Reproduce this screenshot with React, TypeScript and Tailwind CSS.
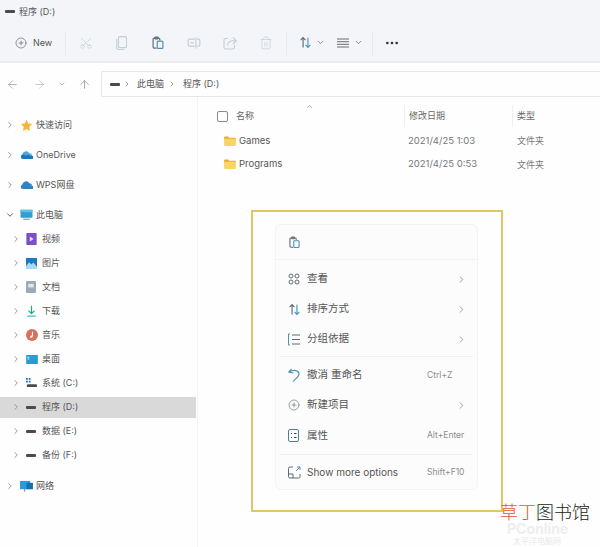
import React from "react";
import {
  ArrowLeft, ArrowRight, ArrowUp, ChevronDown, ChevronRight, ChevronUp, CirclePlus, Scissors, Trash2, MoreHorizontal,
} from "lucide-react";

const font = "font-['Inter','Noto_Sans_CJK_SC',sans-serif]";

function Drive({ className = "" }: { className?: string }) {
  return <span className={`block w-[10px] h-[3px] rounded-[1px] bg-[#4b4b4b] ${className}`} />;
}

function Paste({ size = 14, color = "#5b6b78" }: { size?: number; color?: string }) {
  return (
    <svg width={size} height={size} viewBox="0 0 18 18" fill="none" stroke={color} strokeWidth="1.5">
      <path d="M7 15.500H4a1.300 1.300 0 0 1-1.300-1.300V4A1.300 1.300 0 0 1 4 2.700h6A1.300 1.300 0 0 1 11.300 4v1.500" />
      <rect x="5" y="1.500" width="4" height="2.400" rx="0.700" />
      <rect x="8" y="6.500" width="7.300" height="9.500" rx="1.200" stroke="#4f8fae" />
    </svg>
  );
}

const off = "#c3ced6";

function CopyIcon() {
  return (
    <svg width="14" height="14" viewBox="0 0 14 14" fill="none" stroke={off} strokeWidth="1.100">
      <rect x="3.500" y="0.600" width="8" height="11" rx="1.300" />
      <path d="M1.700 3v8.500a2 2 0 0 0 2 2h5.500" />
    </svg>
  );
}

function Rename() {
  return (
    <svg width="14" height="14" viewBox="0 0 18 18" fill="none" stroke={off} strokeWidth="1.400">
      <path d="M10 4H3a1.500 1.500 0 0 0-1.500 1.500v6A1.500 1.500 0 0 0 3 13h7M13 4h2a1.500 1.500 0 0 1 1.500 1.500v6A1.500 1.500 0 0 1 15 13h-2M11.500 2v14M4.500 8.500h4" />
    </svg>
  );
}

function ShareIcon() {
  return (
    <svg width="14" height="14" viewBox="0 0 14 14" fill="none" stroke={off} strokeWidth="1.100">
      <path d="M5 2.500H2.500A1.500 1.500 0 0 0 1 4v7.500A1.500 1.500 0 0 0 2.500 13H10a1.500 1.500 0 0 0 1.500-1.500V9" />
      <path d="M4.500 9.500C5 6.500 7 4.800 10 4.800h3M10 1.500l3.300 3.300L10 8" />
    </svg>
  );
}

const Sort = ({ s = 13 }: { s?: number }) => (
  <svg width={s} height={s} viewBox="0 0 16 16" fill="none" strokeWidth="1.400">
    <path d="M5 14V2M2 5l3-3 3 3" stroke="#5d6a72" />
    <path d="M11 2v12M8 11l3 3 3-3" stroke="#4a93b5" />
  </svg>
);

const Lines = () => (
  <svg width="12" height="10" viewBox="0 0 12 10" fill="none" stroke="#6c6c6c">
    <path d="M0 1h12M0 3.700h12M0 6.300h12M0 9h12" />
  </svg>
);

const Star = () => (
  <svg width="13" height="13" viewBox="0 0 24 24"><path fill="#f4b63a" d="m12 1.500 3.200 6.800 7.300 1-5.300 5.200 1.300 7.500-6.500-3.600L5.500 22l1.300-7.500L1.500 9.300l7.300-1z" /></svg>
);
const Cloud = ({ c = "#1b76bd", t = "#4fa6de" }: { c?: string; t?: string }) => (
  <svg width="13" height="10" viewBox="0 0 16 12">
    <path fill={t} d="M3 6a4.500 4.500 0 0 1 8.500-2A3.500 3.500 0 0 1 15 7H5z" />
    <path fill={c} d="M3.500 11a2.800 2.800 0 0 1-.3-5.500C4.500 5 6 5.500 7 6.500c2-1 4-1 6 .5A2 2 0 0 1 15.500 11z" />
  </svg>
);
const Pc = () => (
  <svg width="13" height="12" viewBox="0 0 16 15">
    <rect x="0.500" y="1" width="15" height="10" rx="1" fill="#2f9fd0" />
    <rect x="0.500" y="1" width="15" height="3" fill="#5cc1e3" />
    <rect x="4" y="12" width="8" height="1.500" fill="#8a9aa6" />
  </svg>
);
const Video = () => (
  <svg width="11" height="12" viewBox="0 0 12 14">
    <rect width="12" height="14" rx="1" fill="#7d4ec9" />
    <path fill="#e9dcfb" d="m4 4 4.500 3L4 10z" />
  </svg>
);
const Pic = () => (
  <svg width="11" height="11" viewBox="0 0 12 12">
    <rect width="12" height="12" fill="#1e79c4" />
    <path fill="#a5dbf5" d="m0 9 3.500-4.500L6 7l2-2 4 4.500V12H0z" />
  </svg>
);
const Doc = () => (
  <svg width="10" height="12" viewBox="0 0 11 13">
    <rect width="11" height="13" rx="1" fill="#9ca9b8" />
    <rect x="2.500" y="3" width="6" height="4" fill="#dfe5ea" />
  </svg>
);
const Down = () => (
  <svg width="11" height="12" viewBox="0 0 12 14" fill="none" stroke="#22a877" strokeWidth="1.400">
    <path d="M6 1v9M2.500 6.500 6 10l3.500-3.500" />
    <path d="M1 13h10" stroke="#35b8c9" />
  </svg>
);
const Music = () => (
  <svg width="12" height="12" viewBox="0 0 13 13">
    <circle cx="6.500" cy="6.500" r="6.500" fill="#d9705f" />
    <path d="M7 3v5" stroke="#fff" strokeWidth="1.200" />
    <circle cx="5.800" cy="8.300" r="1.300" fill="#fff" />
  </svg>
);
const Desk = () => (
  <svg width="12" height="9" viewBox="0 0 13 10">
    <rect width="13" height="10" fill="#2b9bd6" />
    <rect x="1.500" y="2" width="2" height="1" fill="#fff" />
    <rect x="1.500" y="4" width="2" height="1" fill="#fff" />
  </svg>
);
const SysDrive = () => (
  <svg width="11" height="10" viewBox="0 0 12 11">
    <rect x="0" y="0" width="2" height="2" fill="#2b78b5" /><rect x="3" y="0" width="2" height="2" fill="#2b78b5" />
    <rect x="0" y="3" width="2" height="2" fill="#2b78b5" /><rect x="3" y="3" width="2" height="2" fill="#2b78b5" />
    <rect x="1" y="7" width="11" height="3" rx="1" fill="#4b4b4b" />
  </svg>
);
const Net = () => (
  <svg width="13" height="12" viewBox="0 0 14 13">
    <rect y="1" width="11" height="9" fill="#2b9bd6" />
    <rect x="7" y="3" width="7" height="7" fill="#1a6fa8" />
    <path d="M5 10v2.500" stroke="#5a6a75" />
  </svg>
);

type Row = { label: string; icon: React.ReactNode; sub?: boolean; open?: boolean; sel?: boolean; h: string };
const nav: Row[] = [
  { label: "快速访问", icon: <Star />, h: "h-[30px]" },
  { label: "OneDrive", icon: <Cloud />, h: "h-[30px]" },
  { label: "WPS网盘", icon: <Cloud c="#2f82c4" t="#2f82c4" />, h: "h-[30px]" },
  { label: "此电脑", icon: <Pc />, open: true, h: "h-[24px] mt-[3px]" },
  { label: "视频", icon: <Video />, sub: true, h: "h-[24px]" },
  { label: "图片", icon: <Pic />, sub: true, h: "h-[24px]" },
  { label: "文档", icon: <Doc />, sub: true, h: "h-[24px]" },
  { label: "下载", icon: <Down />, sub: true, h: "h-[24px]" },
  { label: "音乐", icon: <Music />, sub: true, h: "h-[24px]" },
  { label: "桌面", icon: <Desk />, sub: true, h: "h-[24px]" },
  { label: "系统 (C:)", icon: <SysDrive />, sub: true, h: "h-[24px]" },
  { label: "程序 (D:)", icon: <Drive />, sub: true, sel: true, h: "h-[24px]" },
  { label: "数据 (E:)", icon: <Drive />, sub: true, h: "h-[24px]" },
  { label: "备份 (F:)", icon: <Drive />, sub: true, h: "h-[24px]" },
];

function NavRow({ r }: { r: Row }) {
  return (
    <div className={`${r.h} flex items-center relative ${r.sub ? "pl-[11px]" : "pl-[5px]"}`}>
      {r.sel && <div className="absolute left-0 right-[1px] top-[2px] bottom-[1px] bg-[#d9d9d9]" />}
      <span className="relative w-[15px] flex items-center">
        {r.open ? <ChevronDown size={10} color="#444" /> : <ChevronRight size={10} color="#888" />}
      </span>
      <span className="relative w-[16px] flex items-center">{r.icon}</span>
      <span className="relative text-[9px] text-[#555] whitespace-nowrap">{r.label}</span>
    </div>
  );
}

function FolderIcon() {
  return (
    <svg width="12" height="10" viewBox="0 0 13 11" className="mr-[3px]">
      <path fill="#e8ae2c" d="M0 1.500A1 1 0 0 1 1 .5h3.500l1.200 1.300H12a1 1 0 0 1 1 1V4H0z" />
      <path fill="#f9d568" d="M0 3h13v7a1 1 0 0 1-1 1H1a1 1 0 0 1-1-1z" />
    </svg>
  );
}

function MenuRow({ icon, label, right, h = "h-[30px]", small }: { icon: React.ReactNode; label: string; right?: string; h?: string; small?: boolean }) {
  return (
    <div className={`${h} flex items-center pl-[12px] pr-[12px]`}>
      <span className="w-[19px] flex items-center">{icon}</span>
      <span className={`${small ? "text-[10px]" : "text-[10.500px]"} text-[#555] whitespace-nowrap`}>{label}</span>
      {right ? (
        <span className="ml-auto w-[38px] text-[8.500px] leading-none whitespace-nowrap text-[#8d8d8d]">{right}</span>
      ) : (
        <ChevronRight size={11} color="#999" className="ml-auto -mr-[2px]" />
      )}
    </div>
  );
}

export default function App() {
  return (
    <div className={`${font} relative w-[600px] h-[547px] overflow-hidden bg-[#fefefe] text-[#555]`}>
      <div className="h-[63px] bg-[#f3f5f9] border-b-2 border-[#e9ebee] flex flex-col">
        <div className="h-[23px] pl-[5px] flex items-center gap-[4px] text-[9px] text-[#555]">
          <Drive />
          <span>程序 (D:)</span>
        </div>
        <div className="flex-1 flex items-center pt-[1px]">
          <div className="w-[66px] pl-[15px] flex items-center gap-[6px] border-r border-[#e8eaee] h-[24px]">
            <CirclePlus size={12} color="#55626d" strokeWidth={1.300} />
            <span className="text-[9px] text-[#555]">New</span>
          </div>
          <div className="flex items-center gap-[22px] pl-[13px] w-[221px] h-[24px] border-r border-[#e8eaee]">
            <Scissors size={14} color={off} strokeWidth={1.200} className="rotate-[-90deg]" />
            <CopyIcon />
            <Paste />
            <Rename />
            <ShareIcon />
            <Trash2 size={14} color={off} strokeWidth={1.200} />
          </div>
          <div className="w-[86px] h-[24px] flex items-center pl-[12px] border-r border-[#e8eaee]">
            <Sort />
            <ChevronDown size={9} color="#666" className="ml-[4px]" />
            <span className="ml-[12px]"><Lines /></span>
            <ChevronDown size={9} color="#666" className="ml-[5px]" />
          </div>
          <MoreHorizontal size={16} color="#333" className="ml-[11px]" />
        </div>
      </div>

      <div className="h-[34px] flex items-center pt-[8px]">
        <div className="w-[101px] pl-[6px] flex items-center">
          <ArrowLeft size={13} color="#999" strokeWidth={1.300} />
          <ArrowRight size={13} color="#bbb" strokeWidth={1.300} className="ml-[14px]" />
          <ChevronDown size={8} color="#999" className="ml-[12px]" />
          <ArrowUp size={13} color="#888" strokeWidth={1.300} className="ml-[12px]" />
        </div>
        <div className="flex-1 h-[26px] border-y border-l border-[#e6e6e6] rounded-l-[2px] flex items-center pl-[8px] text-[9px] text-[#555]">
          <Drive />
          <ChevronRight size={8} color="#666" className="ml-[3px]" />
          <span className="ml-[6px]">此电脑</span>
          <ChevronRight size={8} color="#666" className="ml-[4px]" />
          <span className="ml-[7px]">程序 (D:)</span>
        </div>
      </div>

      <div className="flex">
        <aside className="w-[198px] h-[450px] border-r border-[#f4f4f4] pt-[13px] shrink-0">
          {nav.map((r) => <NavRow key={r.label} r={r} />)}
          <div className="mt-[4px]"><NavRow r={{ label: "网络", icon: <Net />, h: "h-[30px]" }} /></div>
        </aside>

        <main className="flex-1 pl-[20px]">
          <div className="relative h-[32px] pt-[6px] -ml-[1px] flex items-center text-[9px] text-[#666]">
            <span className="box-content w-[9px] h-[9px] border border-[#8a8a8a] rounded-[2px] mr-[8px]" />
            <span className="w-[168px]">名称</span>
            <ChevronUp size={9} color="#999" className="absolute left-[88px] top-[5px]" />
            <span className="w-[108px] h-[22px] border-l border-[#eef0f2] pl-[4px] flex items-center">修改日期</span>
            <span className="h-[22px] border-l border-[#eef0f2] pl-[4px] flex items-center">类型</span>
          </div>
          {[["Games", "2021/4/25 1:03"], ["Programs", "2021/4/25 0:53"]].map(([n, d]) => (
            <div key={n} className="h-[23.500px] flex items-center text-[9.500px] text-[#777] pl-[6px]">
              <FolderIcon />
              <span className="w-[169px] text-[#555]">{n}</span>
              <span className="w-[109px]">{d}</span>
              <span className="text-[9px]">文件夹</span>
            </div>
          ))}

          <div className="ml-[33px] mt-[34px] w-[252px] h-[302px] border-2 border-[#e3c569] pt-[12px] pl-[22px]">
            <div className="w-[203px] h-[266px] rounded-[6px] border border-[#f4f4f4] bg-[#fcfcfc]">
              <div className="h-[35px] flex items-center pl-[12px] border-b border-[#f3f3f3]"><Paste size={13} /></div>
              <div className="pt-[4px] pb-[2px]">
                <MenuRow label="查看" icon={
                  <svg width="12" height="12" viewBox="0 0 12 12" fill="none" stroke="#5d6a72">
                    <circle cx="3" cy="3" r="2" /><circle cx="9" cy="3" r="2" /><circle cx="3" cy="9" r="2" /><circle cx="9" cy="9" r="2" />
                  </svg>} />
                <MenuRow label="排序方式" icon={<Sort s={13} />} />
                <MenuRow label="分组依据" icon={
                  <svg width="12" height="13" viewBox="0 0 12 13" fill="none" stroke="#5d6a72">
                    <path d="M4 2h8M4 6.500h8M4 11h8" /><path d="M2 1H.5v11H2" stroke="#4a93b5" />
                  </svg>} />
              </div>
              <div className="h-px mx-[4px] bg-[#f1f1f1]" />
              <div className="pt-[3px] pb-[3px]">
                <MenuRow label="撤消 重命名" right="Ctrl+Z" icon={
                  <svg width="12" height="14" viewBox="0 0 12 14" fill="none" stroke="#4a93b5" strokeWidth="1.200">
                    <path d="M3.500 1 1 4l4.500 1" />
                    <path d="M1.500 4C5 1.500 11 2 11 6c0 3-4 5-6 7.500" />
                  </svg>} />
                <MenuRow label="新建项目" icon={<CirclePlus size={12} color="#55626d" strokeWidth={1.200} />} />
                <MenuRow h="h-[31px]" label="属性" right="Alt+Enter" icon={
                  <svg width="11" height="13" viewBox="0 0 11 13" fill="none" stroke="#4f7f99">
                    <rect x=".5" y=".5" width="10" height="12" rx="1.500" /><path d="M3 4.500h1M6 4.500h2.500M3 8.500h1M6 8.500h2.500" stroke="#444" />
                  </svg>} />
              </div>
              <div className="h-px mx-[4px] bg-[#f1f1f1]" />
              <MenuRow small h="h-[35px]" label="Show more options" right="Shift+F10" icon={
                <svg width="13" height="13" viewBox="0 0 13 13" fill="none" stroke="#5d6a72">
                  <path d="M5 1H2A1.500 1.500 0 0 0 .5 2.500v8A1.500 1.500 0 0 0 2 12h8.500A1.500 1.500 0 0 0 12 10.500V8M5 12V8H.5" />
                  <path d="M8 5l4-4M9 1h3v3" stroke="#4a93b5" />
                </svg>} />
            </div>
          </div>
        </main>
      </div>

      <div className="absolute left-[507px] top-[522px] text-[14px] leading-none font-bold text-[#eeeeee] whitespace-nowrap">PConline</div>
      <div className="absolute left-[513px] top-[537px] text-[8px] leading-none text-[#e8e8e8] whitespace-nowrap font-['Noto_Sans_CJK_SC',sans-serif]">太平洋电脑网</div>
      <div className="absolute left-[500px] top-[500px] text-[18px] leading-[22px] whitespace-nowrap font-['Noto_Sans_CJK_SC',sans-serif] font-light">
        <span className="text-[#e4572e]">草丁</span><span className="text-[#222]">图书馆</span>
      </div>
    </div>
  );
}
